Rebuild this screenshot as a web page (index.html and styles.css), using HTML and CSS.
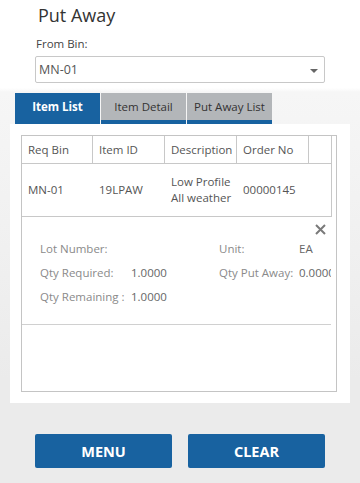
FILE: index.html
```html
<!DOCTYPE html>
<html lang="en">
<head>
    <meta charset="UTF-8">
    <meta name="viewport" content="width=device-width, initial-scale=1.0">
    <title>Put Away</title>
    <link rel="stylesheet" href="styles.css">
</head>
<body>
    <div class="page">
        <h1 class="title">Put Away</h1>

        <div class="field">
            <label for="from-bin">From Bin:</label>
            <div class="select">
                <span id="from-bin">MN-01</span>
                <span class="caret"></span>
            </div>
        </div>

        <div class="tabs">
            <div class="tab active">Item List</div>
            <div class="tab">Item Detail</div>
            <div class="tab">Put Away List</div>
        </div>

        <div class="panel">
            <div class="grid">
                <div class="grid-head">
                    <div class="cell">Req Bin</div>
                    <div class="cell">Item ID</div>
                    <div class="cell">Description</div>
                    <div class="cell">Order No</div>
                    <div class="cell filler"></div>
                </div>
                <div class="grid-row">
                    <div class="cell">MN-01</div>
                    <div class="cell">19LPAW</div>
                    <div class="cell">Low Profile All weather</div>
                    <div class="cell">00000145</div>
                </div>
                <div class="detail">
                    <svg class="close" width="11" height="11" viewBox="0 0 11 11">
                        <path d="M1 1 L10 10 M10 1 L1 10" stroke="#7a7a7a" stroke-width="2" fill="none"/>
                    </svg>
                    <div class="detail-grid">
                        <span class="lbl">Lot Number:</span>
                        <span class="val"></span>
                        <span class="lbl">Unit:</span>
                        <span class="val">EA</span>

                        <span class="lbl">Qty Required:</span>
                        <span class="val">1.0000</span>
                        <span class="lbl">Qty Put Away:</span>
                        <span class="val">0.0000</span>

                        <span class="lbl">Qty Remaining :</span>
                        <span class="val">1.0000</span>
                        <span class="lbl"></span>
                        <span class="val"></span>
                    </div>
                </div>
                <div class="grid-empty"></div>
            </div>
        </div>

        <div class="actions">
            <button class="btn">MENU</button>
            <button class="btn">CLEAR</button>
        </div>
    </div>
</body>
</html>
```

FILE: styles.css
```css
body {
    margin: 0;
    font-family: "Open Sans", "Noto Sans", sans-serif;
    color: #444;
    background: linear-gradient(to bottom, #fff 0, #fff 88px, #f6f6f6 92px, #ebebeb 380px);
    min-height: 483px;
}

.page {
    width: 360px;
    padding-top: 1px;
}

.title {
    margin: 2px 0 0 38px;
    font-size: 18px;
    font-weight: 400;
    color: #333;
    line-height: 24px;
}

.field {
    margin: 9px 35px 0 35px;
}

.field label {
    display: block;
    font-size: 11.5px;
    color: #444;
    line-height: 16px;
    margin-left: 1px;
}

.select {
    margin-top: 4px;
    height: 25px;
    border: 1px solid #c8c8c8;
    border-radius: 2px;
    background: #fff;
    display: flex;
    align-items: center;
    justify-content: space-between;
    padding: 0 6px 0 3px;
    font-size: 12.5px;
    color: #555;
}

.caret {
    width: 0;
    height: 0;
    border-left: 4px solid transparent;
    border-right: 4px solid transparent;
    border-top: 4px solid #666;
    margin-top: 2px;
}

.tabs {
    display: flex;
    gap: 1px;
    margin: 10px 0 0 15px;
    height: 31px;
}

.tab {
    width: 85px;
    box-sizing: border-box;
    background: #b3b6b9;
    border-bottom: 4px solid #1862a0;
    color: #333;
    font-size: 11.5px;
    text-align: center;
    line-height: 27px;
}

.tab.active {
    background: #1862a0;
    color: #fff;
    font-weight: 700;
}

.panel {
    margin: 0 10px;
    background: #fff;
    padding: 11px 13px 11px 11px;
}

.grid {
    border: 1px solid #c4c4c4;
    height: 255px;
    font-size: 11.5px;
    color: #555;
}

.grid-head {
    display: flex;
    height: 27px;
    border-bottom: 1px solid #c8c8c8;
    width: 310px;
}

.grid-head .cell {
    width: 72px;
    box-sizing: border-box;
    border-right: 1px solid #c8c8c8;
    padding-left: 6px;
    line-height: 27px;
}

.grid-head .cell:first-child {
    width: 71px;
}

.grid-head .filler {
    width: 23px;
}

.grid-row {
    display: flex;
    width: 309px;
    height: 52px;
    border-right: 1px solid #c8c8c8;
    border-bottom: 1px solid #c8c8c8;
    align-items: center;
}

.grid-row .cell {
    width: 72px;
    box-sizing: border-box;
    padding-left: 6px;
    line-height: 16px;
}

.grid-row .cell:first-child {
    width: 71px;
}

.detail {
    position: relative;
    width: 309px;
    height: 107px;
    border-bottom: 1px solid #d0d0d0;
    overflow: hidden;
}

.close {
    position: absolute;
    top: 7px;
    right: 5px;
}

.detail-grid {
    display: grid;
    grid-template-columns: 91px 88px 80px 50px;
    grid-auto-rows: 24px;
    padding: 20px 0 0 18px;
    font-size: 11.5px;
    line-height: 24px;
    white-space: nowrap;
}

.lbl {
    color: #8a8a8a;
}

.val {
    color: #666;
}

.actions {
    display: flex;
    gap: 16px;
    margin: 31px 0 0 35px;
}

.btn {
    width: 137px;
    height: 34px;
    border: none;
    border-radius: 2px;
    background: #1862a0;
    color: #fff;
    font-family: "Open Sans", "Noto Sans", sans-serif;
    font-size: 14.5px;
    font-weight: 700;
    cursor: pointer;
}
```
